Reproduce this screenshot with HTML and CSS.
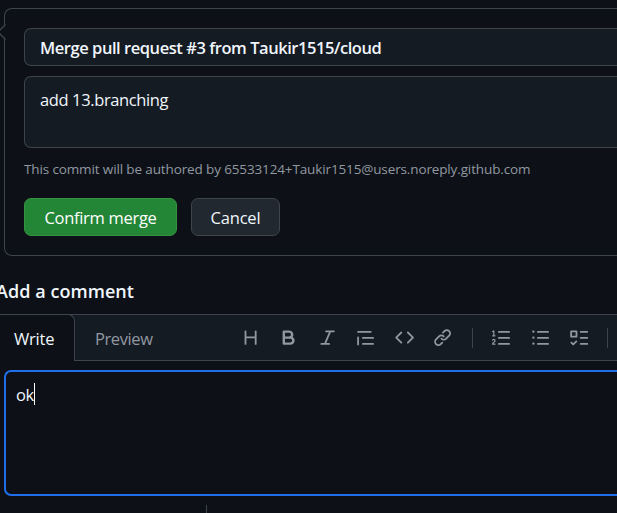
FILE: index.html
```html
<!DOCTYPE html>
<html lang="en">
<head>
<meta charset="utf-8">
<title>Merge pull request</title>
<link rel="stylesheet" href="styles.css">
</head>
<body>
<main class="page">
  <section class="merge">
    <svg class="caret" width="6" height="16" viewBox="0 0 6 16"><path class="caret-fill" d="M6 0L-2 8l8 8z"/><path class="caret-line" d="M5.500 .5L-2 8l7.500 7.500"/></svg>
    <div class="field title">Merge pull request #3 from Taukir1515/cloud</div>
    <div class="field message">add 13.branching</div>
    <p class="hint">This commit will be authored by 65533124+Taukir1515@users.noreply.github.com</p>
    <div class="actions">
      <button class="btn primary">Confirm merge</button>
      <button class="btn cancel">Cancel</button>
    </div>
  </section>
  <h2 class="heading">Add a comment</h2>
  <div class="tabs">
    <div class="tab active">Write</div>
    <div class="tabbar">
      <span class="preview">Preview</span>
      <div class="tools">
        <svg class="icon" viewBox="0 0 16 16"><path d="M3.750 2a.75.75 0 0 1 .75.75V7h7V2.750a.75.75 0 0 1 1.500 0v10.500a.75.75 0 0 1-1.500 0V8.500h-7v4.750a.75.75 0 0 1-1.500 0V2.750A.75.75 0 0 1 3.750 2Z"/></svg>
        <svg class="icon" viewBox="0 0 16 16"><path d="M4 2h4.500a3.501 3.501 0 0 1 2.852 5.530A3.499 3.499 0 0 1 9.500 14H4a1 1 0 0 1-1-1V3a1 1 0 0 1 1-1Zm1 7v3h4.500a1.500 1.500 0 0 0 0-3Zm3.500-2a1.500 1.500 0 0 0 0-3H5v3Z"/></svg>
        <svg class="icon" viewBox="0 0 16 16"><path d="M6 2.750A.75.75 0 0 1 6.750 2h6.500a.75.75 0 0 1 0 1.500h-2.505l-3.858 9H9.250a.75.75 0 0 1 0 1.500h-6.500a.75.75 0 0 1 0-1.500h2.505l3.858-9H6.750A.75.75 0 0 1 6 2.750Z"/></svg>
        <svg class="icon" viewBox="0 0 16 16"><path d="M1.750 2.500h10.500a.75.75 0 0 1 0 1.500H1.750a.75.75 0 0 1 0-1.500Zm4 5h8.500a.75.75 0 0 1 0 1.500h-8.500a.75.75 0 0 1 0-1.500Zm0 5h8.500a.75.75 0 0 1 0 1.500h-8.500a.75.75 0 0 1 0-1.500ZM2.500 7.750v6a.75.75 0 0 1-1.500 0v-6a.75.75 0 0 1 1.500 0Z"/></svg>
        <svg class="icon" viewBox="0 0 16 16"><path d="m11.280 3.220 4.250 4.250a.75.75 0 0 1 0 1.060l-4.250 4.250a.749.749 0 0 1-1.275-.326.749.749 0 0 1 .215-.734L13.940 8l-3.720-3.720a.749.749 0 0 1 .326-1.275.749.749 0 0 1 .734.215Zm-6.560 0a.751.751 0 0 1 1.042.018.751.751 0 0 1 .018 1.042L2.060 8l3.720 3.720a.749.749 0 0 1-.326 1.275.749.749 0 0 1-.734-.215L.47 8.530a.75.75 0 0 1 0-1.060Z"/></svg>
        <svg class="icon" viewBox="0 0 16 16"><path d="m7.775 3.275 1.250-1.250a3.500 3.500 0 1 1 4.950 4.950l-2.500 2.500a3.500 3.500 0 0 1-4.950 0 .751.751 0 0 1 .018-1.042.751.751 0 0 1 1.042-.018 1.998 1.998 0 0 0 2.830 0l2.500-2.500a2.002 2.002 0 0 0-2.830-2.830l-1.250 1.250a.751.751 0 0 1-1.042-.018.751.751 0 0 1-.018-1.042Zm-4.690 9.640a1.998 1.998 0 0 0 2.830 0l1.250-1.250a.751.751 0 0 1 1.042.018.751.751 0 0 1 .018 1.042l-1.250 1.250a3.500 3.500 0 1 1-4.950-4.950l2.500-2.500a3.500 3.500 0 0 1 4.950 0 .751.751 0 0 1-.018 1.042.751.751 0 0 1-1.042.018 1.998 1.998 0 0 0-2.830 0l-2.500 2.500a1.998 1.998 0 0 0 0 2.830Z"/></svg>
        <i class="sep"></i>
        <svg class="icon" viewBox="0 0 16 16"><path d="M5 3.250a.75.75 0 0 1 .75-.75h8.500a.75.75 0 0 1 0 1.500h-8.500A.75.75 0 0 1 5 3.250Zm0 5a.75.75 0 0 1 .75-.75h8.500a.75.75 0 0 1 0 1.500h-8.500A.75.75 0 0 1 5 8.250Zm0 5a.75.75 0 0 1 .75-.75h8.500a.75.75 0 0 1 0 1.500h-8.500a.75.75 0 0 1-.75-.75ZM.924 10.320a.5.5 0 0 1-.851-.525l.001-.001.001-.002.002-.004.007-.011c.097-.144.215-.273.348-.384.228-.19.588-.392 1.068-.392.468 0 .858.181 1.126.484.259.294.377.673.377 1.038 0 .987-.686 1.495-1.156 1.845l-.047.035c-.303.225-.522.4-.654.597h1.357a.5.5 0 0 1 0 1H.5a.5.5 0 0 1-.5-.5c0-1.005.692-1.520 1.167-1.875l.035-.025c.531-.396.8-.625.8-1.078a.57.57 0 0 0-.128-.376C1.806 10.068 1.695 10 1.500 10a.658.658 0 0 0-.429.163.835.835 0 0 0-.144.153ZM2.003 2.500V6h.503a.5.5 0 0 1 0 1H.5a.5.5 0 0 1 0-1h.503V3.308l-.28.14a.5.5 0 0 1-.446-.895l1.003-.5a.5.5 0 0 1 .723.447Z"/></svg>
        <svg class="icon" viewBox="0 0 16 16"><path d="M5.750 2.500h8.500a.75.75 0 0 1 0 1.500h-8.500a.75.75 0 0 1 0-1.500Zm0 5h8.500a.75.75 0 0 1 0 1.500h-8.500a.75.75 0 0 1 0-1.500Zm0 5h8.500a.75.75 0 0 1 0 1.500h-8.500a.75.75 0 0 1 0-1.500ZM2 14a1 1 0 1 1 0-2 1 1 0 0 1 0 2Zm1-6a1 1 0 1 1-2 0 1 1 0 0 1 2 0ZM2 4a1 1 0 1 1 0-2 1 1 0 0 1 0 2Z"/></svg>
        <svg class="icon" viewBox="0 0 16 16"><path d="M2 2h4a1 1 0 0 1 1 1v4a1 1 0 0 1-1 1H2a1 1 0 0 1-1-1V3a1 1 0 0 1 1-1Zm4.655 8.595a.75.75 0 0 1 0 1.060L4.030 14.280a.75.75 0 0 1-1.060 0l-1.500-1.500a.749.749 0 0 1 .326-1.275.749.749 0 0 1 .734.215l.97.97 2.095-2.095a.75.75 0 0 1 1.060 0ZM9.750 2.500h5.500a.75.75 0 0 1 0 1.500h-5.500a.75.75 0 0 1 0-1.500Zm0 5h5.500a.75.75 0 0 1 0 1.500h-5.500a.75.75 0 0 1 0-1.500Zm0 5h5.500a.75.75 0 0 1 0 1.500h-5.500a.75.75 0 0 1 0-1.500Zm-7.250-9v3h3v-3Z"/></svg>
        <i class="sep last"></i>
      </div>
    </div>
  </div>
  <div class="comment">ok<i class="cursor"></i></div>
  <i class="foot"></i>
</main>
</body>
</html>
```
FILE: styles.css
```css
* { box-sizing: border-box; }
body { margin: 0; background: #0d1117; color: #f0f6fc; font-family: "Open Sans", "Noto Sans", sans-serif; font-size: 16.500px; overflow: hidden; }
.page { width: 617px; height: 513px; overflow: hidden; padding-top: 8px; white-space: nowrap; }
.merge { position: relative; height: 248px; margin-left: 4px; padding: 19px 0 19px 19px; border: 1px solid #3d444d; border-right: 0; border-radius: 8px 0 0 8px; }
.caret { position: absolute; left: -5px; top: 15px; }
.caret-fill { fill: #0d1117; }
.caret-line { fill: none; stroke: #3d444d; stroke-width: 1.400; }
.field { background: #151b23; border: 1px solid #3d444d; border-right: 0; border-radius: 7px 0 0 7px; padding-left: 15px; }
.title { height: 38px; line-height: 37px; font-weight: 600; letter-spacing: -.45px; }
.message { height: 72px; margin-top: 10px; line-height: 46px; letter-spacing: -.38px; }
.hint { margin: 10px 0 0; height: 22px; line-height: 22px; font-size: 13.500px; letter-spacing: -.13px; color: #9198a1; }
.actions { display: flex; gap: 14px; margin-top: 18px; }
.btn { height: 38px; padding: 1px 0 0; border: 1px solid #3d444d; border-radius: 7px; font: inherit; line-height: 35px; letter-spacing: -.3px; text-align: center; color: #f0f6fc; background: #212830; }
.primary { width: 153px; background: #238636; border-color: #35913f; color: #fff; }
.cancel { width: 89px; letter-spacing: -.2px; }
.heading { margin: 23px 0 0 -4px; height: 24px; line-height: 24px; font-size: 18px; font-weight: 600; letter-spacing: .05px; }
.tabs { display: flex; height: 47px; margin-top: 11px; }
.tab { position: relative; z-index: 1; width: 75px; padding-left: 14px; line-height: 47px; letter-spacing: -.2px; background: #0d1117; border-top: 1px solid #3d444d; border-right: 1px solid #3d444d; border-radius: 0 7px 0 0; }
.tabbar { flex: 1; display: flex; align-items: center; background: #151b23; border: solid #3d444d; border-width: 1px 0; margin-left: -7px; padding-left: 27px; }
.preview { width: 146px; padding-top: 1px; letter-spacing: -.4px; color: #9198a1; }
.tools { display: flex; align-items: center; gap: 19.300px; }
.icon { width: 19.200px; height: 19.200px; fill: #9198a1; flex: none; }
.sep { width: 1px; height: 20px; background: #3d444d; flex: none; }
.last { margin-left: -1px; }
.comment { display: flex; height: 126px; margin: 9px 0 0 4px; padding: 10px; border: 2px solid #1f6feb; border-right: 0; border-radius: 7px 0 0 7px; line-height: 26px; letter-spacing: -.4px; }
.cursor { width: 1px; height: 22px; margin-top: 1px; background: #fff; }
.foot { display: block; width: 1px; height: 8px; margin: 9px 0 0 206px; background: #3d444d; }
```
